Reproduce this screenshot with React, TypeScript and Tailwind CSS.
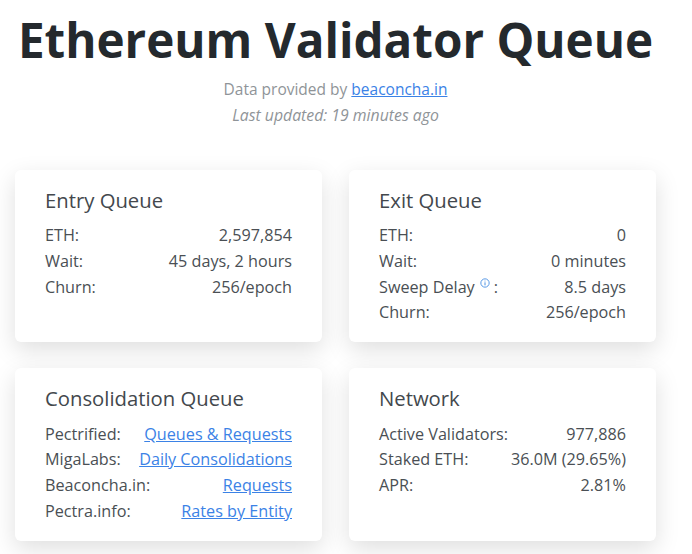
const font = { fontFamily: '"Open Sans", "Noto Sans", sans-serif' };

function Row({ label, children }: { label: React.ReactNode; children: React.ReactNode }) {
  return (
    <div className="flex justify-between h-[25.7px] items-center">
      <span>{label}</span>
      <span>{children}</span>
    </div>
  );
}

function Lnk({ children }: { children: React.ReactNode }) {
  return (
    <a href="#" className="text-[#3b82e6] underline">
      {children}
    </a>
  );
}

function Card({ title, children }: { title: string; children: React.ReactNode }) {
  return (
    <div className="h-[172.5px] w-[307px] bg-white rounded-md shadow-[0_8px_24px_rgba(0,0,0,0.13)] px-[30px] pt-[15px] text-[16.2px] text-[#4a4f54]">
      <h2 className="text-[20.3px] leading-[30px] mb-[8px] text-[#43484d]">{title}</h2>
      {children}
    </div>
  );
}

export default function App() {
  return (
    <div className="w-[692px] h-[554px] overflow-hidden bg-white" style={font}>
      <div className="w-[671px]">
        <h1 className="text-[47.6px] leading-[60px] font-bold text-[#24292d] text-center pt-[10px]">
          Ethereum Validator Queue
        </h1>
        <p className="text-center text-[15.5px] text-[#8f9498] mt-[6px] leading-[26px]">
          Data provided by <Lnk>beaconcha.in</Lnk>
        </p>
        <p className="text-center text-[15.8px] text-[#8f9498] italic leading-[26px]">
          Last updated: 19 minutes ago
        </p>
        <div className="grid grid-cols-[307px_307px] gap-x-[27px] gap-y-[26px] pl-[15px] mt-[41.5px]">
          <Card title="Entry Queue">
            <Row label="ETH:">2,597,854</Row>
            <Row label="Wait:">45 days, 2 hours</Row>
            <Row label="Churn:">256/epoch</Row>
          </Card>
          <Card title="Exit Queue">
            <Row label="ETH:">0</Row>
            <Row label="Wait:">0 minutes</Row>
            <Row
              label={
                <span className="flex items-start">
                  Sweep Delay
                  <svg viewBox="0 0 12 12" className="w-[10px] h-[10px] ml-[5px] mt-[3px] mr-[4px] text-[#4a90e2]" fill="none" stroke="currentColor">
                    <circle cx="6" cy="6" r="5" strokeWidth="1.1" />
                    <path d="M6 3.2v.9M6 5.2v3.6" strokeWidth="1.2" />
                  </svg>
                  :
                </span>
              }
            >
              8.5 days
            </Row>
            <Row label="Churn:">256/epoch</Row>
          </Card>
          <Card title="Consolidation Queue">
            <Row label="Pectrified:"><Lnk>Queues &amp; Requests</Lnk></Row>
            <Row label="MigaLabs:"><Lnk>Daily Consolidations</Lnk></Row>
            <Row label="Beaconcha.in:"><Lnk>Requests</Lnk></Row>
            <Row label="Pectra.info:"><Lnk>Rates by Entity</Lnk></Row>
          </Card>
          <Card title="Network">
            <Row label="Active Validators:">977,886</Row>
            <Row label="Staked ETH:">36.0M (29.65%)</Row>
            <Row label="APR:">2.81%</Row>
          </Card>
        </div>
      </div>
    </div>
  );
}
